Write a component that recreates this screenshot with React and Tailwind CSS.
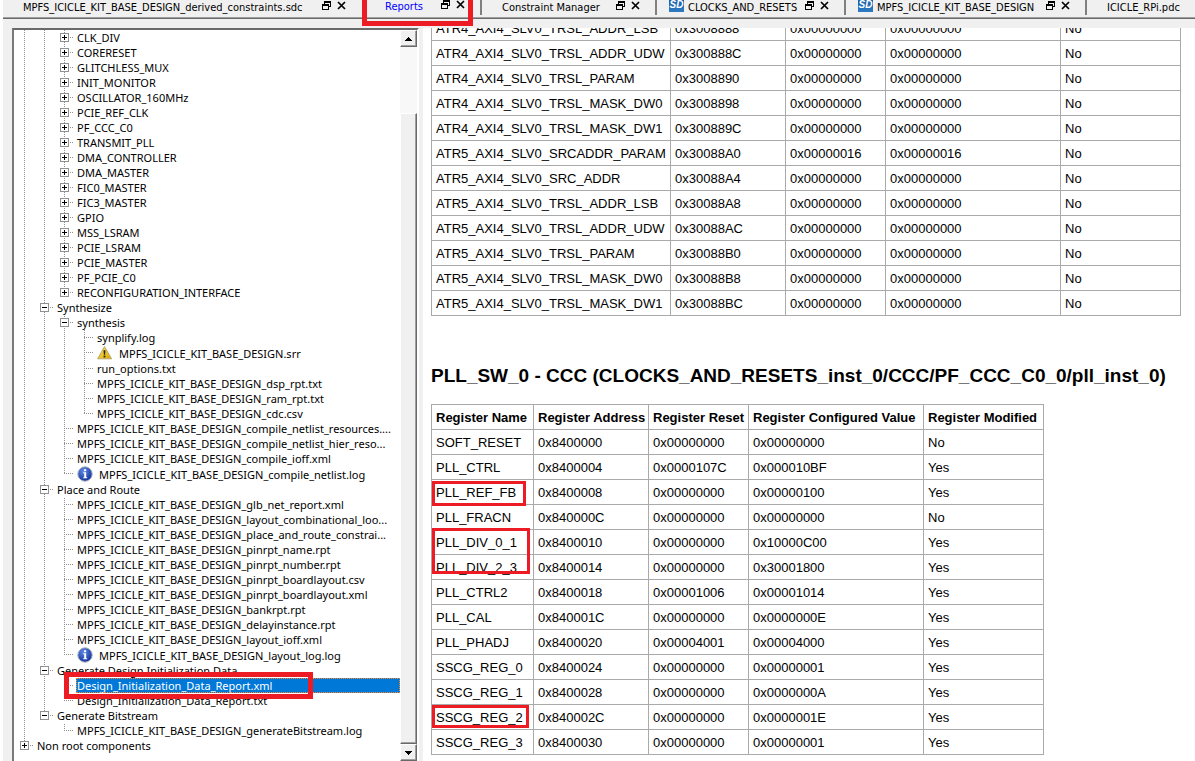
import React from "react";

const KIT = "MPFS_ICICLE_KIT_BASE_DESIGN";

// guides: one character per indent column
//   "|" passing line, " " empty, "t" tee, "l" last child, "+" / "-" expander,
//   "P" collapsed last child, "M" expanded last child
const TREE = [
  ...[
    "CLK_DIV",
    "CORERESET",
    "GLITCHLESS_MUX",
    "INIT_MONITOR",
    "OSCILLATOR_160MHz",
    "PCIE_REF_CLK",
    "PF_CCC_C0",
    "TRANSMIT_PLL",
    "DMA_CONTROLLER",
    "DMA_MASTER",
    "FIC0_MASTER",
    "FIC3_MASTER",
    "GPIO",
    "MSS_LSRAM",
    "PCIE_LSRAM",
    "PCIE_MASTER",
    "PF_PCIE_C0",
  ].map((label) => ({ guides: "||+", label })),
  { guides: "||P", label: "RECONFIGURATION_INTERFACE" },
  { guides: "|-", label: "Synthesize" },
  { guides: "||-", label: "synthesis" },
  { guides: "|||t", label: "synplify.log" },
  { guides: "|||t", label: `${KIT}.srr`, icon: "warning" },
  { guides: "|||t", label: "run_options.txt" },
  { guides: "|||t", label: `${KIT}_dsp_rpt.txt` },
  { guides: "|||t", label: `${KIT}_ram_rpt.txt` },
  { guides: "|||l", label: `${KIT}_cdc.csv` },
  { guides: "||t", label: `${KIT}_compile_netlist_resources....` },
  { guides: "||t", label: `${KIT}_compile_netlist_hier_reso...` },
  { guides: "||t", label: `${KIT}_compile_ioff.xml` },
  { guides: "||l", label: `${KIT}_compile_netlist.log`, icon: "info" },
  { guides: "|-", label: "Place and Route" },
  ...[
    "glb_net_report.xml",
    "layout_combinational_loo...",
    "place_and_route_constrai...",
    "pinrpt_name.rpt",
    "pinrpt_number.rpt",
    "pinrpt_boardlayout.csv",
    "pinrpt_boardlayout.xml",
    "bankrpt.rpt",
    "delayinstance.rpt",
    "layout_ioff.xml",
  ].map((name) => ({ guides: "||t", label: `${KIT}_${name}` })),
  { guides: "||l", label: `${KIT}_layout_log.log`, icon: "info" },
  { guides: "|-", label: "Generate Design Initialization Data" },
  { guides: "||t", label: "Design_Initialization_Data_Report.xml", selected: true },
  { guides: "||l", label: "Design_Initialization_Data_Report.txt" },
  { guides: "|M", label: "Generate Bitstream" },
  { guides: "| l", label: `${KIT}_generateBitstream.log` },
  { guides: "P", label: "Non root components" },
];

const ATR_ROWS = [
  ["ATR4_AXI4_SLV0_TRSL_ADDR_LSB", "0x3008888", "0x00000000", "0x00000000", "No"],
  ["ATR4_AXI4_SLV0_TRSL_ADDR_UDW", "0x300888C", "0x00000000", "0x00000000", "No"],
  ["ATR4_AXI4_SLV0_TRSL_PARAM", "0x3008890", "0x00000000", "0x00000000", "No"],
  ["ATR4_AXI4_SLV0_TRSL_MASK_DW0", "0x3008898", "0x00000000", "0x00000000", "No"],
  ["ATR4_AXI4_SLV0_TRSL_MASK_DW1", "0x300889C", "0x00000000", "0x00000000", "No"],
  ["ATR5_AXI4_SLV0_SRCADDR_PARAM", "0x30088A0", "0x00000016", "0x00000016", "No"],
  ["ATR5_AXI4_SLV0_SRC_ADDR", "0x30088A4", "0x00000000", "0x00000000", "No"],
  ["ATR5_AXI4_SLV0_TRSL_ADDR_LSB", "0x30088A8", "0x00000000", "0x00000000", "No"],
  ["ATR5_AXI4_SLV0_TRSL_ADDR_UDW", "0x30088AC", "0x00000000", "0x00000000", "No"],
  ["ATR5_AXI4_SLV0_TRSL_PARAM", "0x30088B0", "0x00000000", "0x00000000", "No"],
  ["ATR5_AXI4_SLV0_TRSL_MASK_DW0", "0x30088B8", "0x00000000", "0x00000000", "No"],
  ["ATR5_AXI4_SLV0_TRSL_MASK_DW1", "0x30088BC", "0x00000000", "0x00000000", "No"],
];

const PLL_HEAD = [
  "Register Name",
  "Register Address",
  "Register Reset",
  "Register Configured Value",
  "Register Modified",
];

const PLL_ROWS = [
  ["SOFT_RESET", "0x8400000", "0x00000000", "0x00000000", "No"],
  ["PLL_CTRL", "0x8400004", "0x0000107C", "0x000010BF", "Yes"],
  ["PLL_REF_FB", "0x8400008", "0x00000000", "0x00000100", "Yes"],
  ["PLL_FRACN", "0x840000C", "0x00000000", "0x00000000", "No"],
  ["PLL_DIV_0_1", "0x8400010", "0x00000000", "0x10000C00", "Yes"],
  ["PLL_DIV_2_3", "0x8400014", "0x00000000", "0x30001800", "Yes"],
  ["PLL_CTRL2", "0x8400018", "0x00001006", "0x00001014", "Yes"],
  ["PLL_CAL", "0x840001C", "0x00000000", "0x0000000E", "Yes"],
  ["PLL_PHADJ", "0x8400020", "0x00004001", "0x00004000", "Yes"],
  ["SSCG_REG_0", "0x8400024", "0x00000000", "0x00000001", "Yes"],
  ["SSCG_REG_1", "0x8400028", "0x00000000", "0x0000000A", "Yes"],
  ["SSCG_REG_2", "0x840002C", "0x00000000", "0x0000001E", "Yes"],
  ["SSCG_REG_3", "0x8400030", "0x00000000", "0x00000001", "Yes"],
];

const MARKS = {
  PLL_REF_FB: "top-px h-[25px] w-[94px]",
  PLL_DIV_0_1: "-top-[2px] h-[46px] w-[98px]",
  SSCG_REG_2: "top-0 h-[23px] w-[97px]",
};

function FloatIcon() {
  return (
    <svg width="9" height="9" viewBox="0 0 9 9" shapeRendering="crispEdges" fill="#000">
      <path d="M2 0h7v6H7V5h1V2H3v1H2z" />
      <path fillRule="evenodd" d="M0 3h7v6H0zM1 5v3h5V5z" />
    </svg>
  );
}

function CloseIcon() {
  return (
    <svg width="9" height="9" viewBox="0 0 9 9">
      <path d="M1 1l7 7M8 1l-7 7" stroke="#000" strokeWidth="1.7" />
    </svg>
  );
}

function SdIcon() {
  return (
    <svg width="15" height="12" viewBox="0 0 15 12" className="shrink-0 self-start" aria-hidden="true">
      <defs>
        <linearGradient id="sd" x1="0" y1="0" x2="0" y2="1">
          <stop offset="0" stopColor="#1c5fa8" />
          <stop offset="1" stopColor="#2f7cc4" />
        </linearGradient>
      </defs>
      <rect width="15" height="12" fill="url(#sd)" />
      <text x="7.5" y="8" textAnchor="middle" fontSize="10" fontWeight="bold" fontStyle="italic" fontFamily="Liberation Sans, sans-serif" fill="#fff">
        SD
      </text>
    </svg>
  );
}

function WarningIcon() {
  return (
    <svg width="16" height="16" viewBox="0 0 16 16" className="shrink-0" aria-label="Warning">
      <defs>
        <linearGradient id="warn" x1="0" y1="0" x2="1" y2="1">
          <stop offset="0" stopColor="#ffe95a" />
          <stop offset="1" stopColor="#d9a400" />
        </linearGradient>
      </defs>
      <path d="M7.5 1.6L14.6 13.8H0.6z" fill="url(#warn)" stroke="#b9a86a" strokeWidth="1" strokeLinejoin="round" />
      <path d="M6.5 5.2h2l-.4 4.6H6.9z" fill="#222" />
      <rect x="6.6" y="10.6" width="1.8" height="1.8" fill="#222" />
    </svg>
  );
}

function InfoIcon() {
  return (
    <svg width="16" height="16" viewBox="0 0 16 16" className="shrink-0" aria-label="Information">
      <defs>
        <radialGradient id="info" cx="0.4" cy="0.3" r="0.7">
          <stop offset="0" stopColor="#5f8ae6" />
          <stop offset="1" stopColor="#12349c" />
        </radialGradient>
      </defs>
      <circle cx="8" cy="8" r="7.2" fill="url(#info)" stroke="#a9afbd" strokeWidth="1" />
      <rect x="7" y="3.2" width="2.2" height="2" fill="#fff" />
      <path d="M6.2 6.3h3v5h1v1H6.2v-1h1v-4h-1z" fill="#fff" />
    </svg>
  );
}

function GuideLines({ kind, height, phase }) {
  const mid = 7;
  const ends = kind === "l";
  const line = { stroke: "#8f8f8f", strokeDasharray: "1 1", shapeRendering: "crispEdges" };
  return (
    <svg width="20" height={height} viewBox={`0 0 20 ${height}`} aria-hidden="true">
      <line x1="10.5" x2="10.5" y1={phase} y2={ends ? mid + 1 : height} {...line} />
      {kind !== "|" && <line x1="10" x2="20" y1={mid + 0.5} y2={mid + 0.5} {...line} />}
    </svg>
  );
}

function ExpanderIcon({ kind, phase }) {
  const open = kind === "-" || kind === "M";
  const last = kind === "P" || kind === "M";
  const line = { stroke: "#8f8f8f", strokeDasharray: "1 1" };
  return (
    <svg width="20" height="15" viewBox="0 0 20 15" shapeRendering="crispEdges" aria-hidden="true">
      <line x1="10.5" x2="10.5" y1={phase} y2={last ? 8 : 15} {...line} />
      <line x1="16" x2="20" y1="7.5" y2="7.5" {...line} />
      <rect x="6.5" y="3.5" width="8" height="8" fill="#fff" stroke="#919191" />
      <path d={open ? "M8 7h5v1H8z" : "M8 7h5v1H8zM10 5h1v5h-1z"} fill="#000" />
    </svg>
  );
}

function TreeRow({ item, phase }) {
  const height = item.icon ? 16 : 15;
  return (
    <li
      role="treeitem"
      aria-selected={!!item.selected}
      className={item.icon ? "relative flex h-4 items-center" : "relative flex h-[15px] items-center"}
    >
      {[...item.guides].map((kind, i) => {
        if (kind === " ") return <span key={i} className="w-5 shrink-0" />;
        if (kind === "|" || kind === "t" || kind === "l")
          return (
            <span key={i} className="flex w-5 shrink-0">
              <GuideLines kind={kind} height={height} phase={phase} />
            </span>
          );
        return (
          <button key={i} type="button" aria-label={`Toggle ${item.label}`} className="flex w-5 shrink-0">
            <ExpanderIcon kind={kind} phase={phase} />
          </button>
        );
      })}
      <span
        className={
          item.selected
            ? "ml-0.5 flex h-full min-w-0 flex-1 items-center bg-[#0078d7] pl-px text-white outline-1 -outline-offset-1 outline-dotted outline-[#ff8728]"
            : "flex min-w-0 flex-1 items-center pl-[3px]"
        }
      >
        {item.icon === "warning" && <WarningIcon />}
        {item.icon === "info" && <InfoIcon />}
        <span className={item.icon ? "pl-1.5 whitespace-nowrap" : "whitespace-nowrap"}>{item.label}</span>
      </span>
      {item.selected && (
        <span className="pointer-events-none absolute -top-1.5 left-[50px] z-10 h-[27px] w-[249px] border-5 border-[#ed1c24]" />
      )}
    </li>
  );
}

function Tree() {
  let top = 0;
  return (
    <ul role="tree" aria-label="Reports" className="min-w-0 flex-1 overflow-hidden font-['Noto_Sans',sans-serif] text-[11px] leading-[15px]">
      {TREE.map((item) => {
        const phase = top % 2;
        top += item.icon ? 16 : 15;
        return <TreeRow key={item.label} item={item} phase={phase} />;
      })}
    </ul>
  );
}

function ScrollButton({ label, up }) {
  return (
    <button
      type="button"
      aria-label={label}
      className="flex h-[17px] w-full shrink-0 items-center justify-center border border-t-white border-r-[#696969] border-b-[#696969] border-l-white bg-[#f0f0f0] shadow-[inset_-1px_-1px_0_#a0a0a0]"
    >
      <svg width="7" height="4" viewBox="0 0 7 4" shapeRendering="crispEdges" aria-hidden="true">
        <path d={up ? "M3 0h1v1h1v1h1v1h1v1H0V3h1V2h1V1h1z" : "M0 0h7v1H6v1H5v1H4v1H3V3H2V2H1V1H0z"} />
      </svg>
    </button>
  );
}

function ScrollBar() {
  return (
    <div className="flex w-[17px] shrink-0 flex-col bg-[#f8f8f8]">
      <ScrollButton label="Scroll up" up />
      <div className="h-[66px] shrink-0" />
      <div className="flex-1 border border-t-white border-r-[#696969] border-b-[#696969] border-l-white bg-[#f0f0f0] shadow-[inset_-1px_-1px_0_#a0a0a0]" />
      <ScrollButton label="Scroll down" />
    </div>
  );
}

function Tab({ label, width, pad, sd, active, closable = true, divided }) {
  return (
    <div
      className={`relative flex h-[15px] shrink-0 items-center pr-[15px] ${width} ${pad} ${
        divided ? "border-l-2 border-[#808080]" : ""
      }`}
    >
      {sd && <SdIcon />}
      <button
        type="button"
        role="tab"
        aria-selected={!!active}
        className={`flex-1 text-left whitespace-nowrap ${sd ? "pl-1" : ""} ${active ? "pb-0.5 text-[#0000ff]" : ""}`}
      >
        {label}
      </button>
      {closable && (
        <span className={active ? "flex gap-1.5 pb-1.5" : "flex gap-1.5 pb-1"}>
          <button type="button" aria-label={`Float ${label}`}>
            <FloatIcon />
          </button>
          <button type="button" aria-label={`Close ${label}`}>
            <CloseIcon />
          </button>
        </span>
      )}
      {active && (
        <span className="pointer-events-none absolute top-0 left-px z-10 h-[26px] w-[111px] border-x-5 border-b-5 border-[#ed1c24]" />
      )}
    </div>
  );
}

function Cell({ children, mark }) {
  return (
    <td className="border border-[#aaaaaa] p-0">
      <div className="relative h-6 px-1 leading-[26px]">
        {children}
        {mark && <span className={`pointer-events-none absolute left-0 z-10 border-3 border-[#ed1c24] ${mark}`} />}
      </div>
    </td>
  );
}

function RegisterTable({ label, head, rows, widths, className }) {
  return (
    <table aria-label={label} className={`table-fixed border-collapse text-[13px] ${className}`}>
      <colgroup>
        {widths.map((w, i) => (
          <col key={i} className={w} />
        ))}
      </colgroup>
      {head && (
        <thead>
          <tr>
            {head.map((h) => (
              <th key={h} scope="col" className="border border-[#aaaaaa] p-0 text-left font-bold">
                <div className="h-6 px-1 leading-[26px] whitespace-nowrap">{h}</div>
              </th>
            ))}
          </tr>
        </thead>
      )}
      <tbody>
        {rows.map((row) => (
          <tr key={row[0]}>
            {row.map((value, i) => (
              <Cell key={i} mark={i === 0 ? MARKS[value] : undefined}>
                {value}
              </Cell>
            ))}
          </tr>
        ))}
      </tbody>
    </table>
  );
}

export default function App() {
  return (
    <div className="flex h-screen flex-col overflow-hidden bg-white pl-[3px] text-black">
      <div
        role="tablist"
        className="flex h-[19px] shrink-0 items-start border-b border-[#696969] bg-[#f0f0f0] font-['DejaVu_Sans_Condensed','DejaVu_Sans',sans-serif] text-[11px] leading-[13px] shadow-[inset_0_-1px_0_#a0a0a0]"
      >
        <Tab label={`${KIT}_derived_constraints.sdc`} width="w-[358px]" pad="pl-5" />
        <Tab label="Reports" width="w-[119px]" pad="pl-6" active />
        <Tab label="Constraint Manager" width="w-[175px]" pad="pl-5" divided />
        <Tab label="CLOCKS_AND_RESETS" width="w-[189px]" pad="pl-3" sd divided />
        <Tab label={KIT} width="w-[241px]" pad="pl-3" sd divided />
        <Tab label="ICICLE_RPi.pdc" width="w-[175px]" pad="pl-5" closable={false} divided />
      </div>
      <div className="flex min-h-0 flex-1 bg-[#f0f0f0] pt-[9px]">
        <aside className="ml-[9px] flex w-[407px] shrink-0 border-t-2 border-r-2 border-l-2 border-t-[#696969] border-r-white border-l-[#7a7a7a] bg-white">
          <Tree />
          <ScrollBar />
        </aside>
        <main className="ml-1 min-w-0 flex-1 overflow-hidden bg-white pl-2 font-['Liberation_Sans',Arial,sans-serif]">
          <RegisterTable
            label="PCIe address translation registers"
            rows={ATR_ROWS}
            widths={["w-[239px]", "w-[115px]", "w-[100px]", "w-[175px]", "w-[120px]"]}
            className="-mt-[13px] w-[750px]"
          />
          <h2 className="mt-12 mb-4 text-[19px] leading-6 font-bold whitespace-nowrap">
            PLL_SW_0 - CCC (CLOCKS_AND_RESETS_inst_0/CCC/PF_CCC_C0_0/pll_inst_0)
          </h2>
          <RegisterTable
            label="PLL_SW_0 registers"
            head={PLL_HEAD}
            rows={PLL_ROWS}
            widths={["w-[102px]", "w-[115px]", "w-[100px]", "w-[175px]", "w-[120px]"]}
            className="w-[613px]"
          />
        </main>
      </div>
    </div>
  );
}
